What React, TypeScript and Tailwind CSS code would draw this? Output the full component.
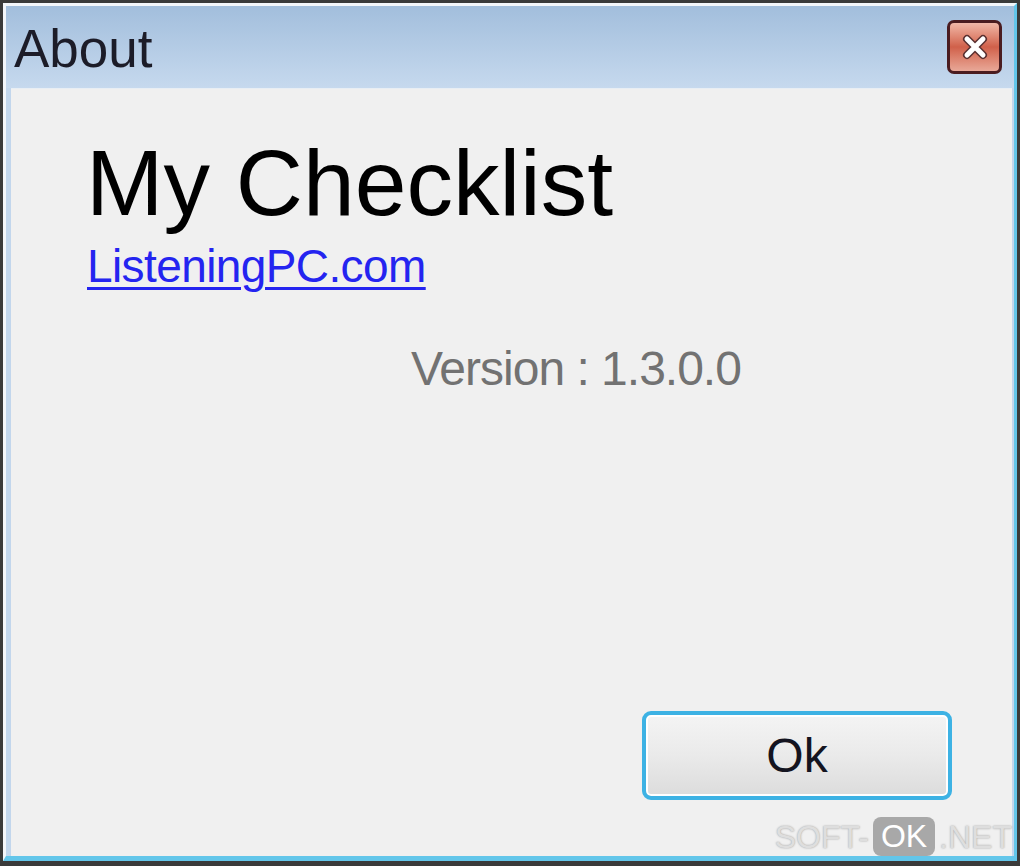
export default function App() {
    return (
        <div className="w-[1020px] h-[866px] bg-[#3a3a3a] pt-[3px] pl-[3px] pr-[3px] pb-[5px] font-['Liberation_Sans',Arial,sans-serif]">
            <div className="relative h-full flex flex-col border-t-[3px] border-l-[3px] border-r-[3px] border-b-[5px] border-t-[#f3f6fa] border-l-[#f3f6fa] border-r-[#63c6ea] border-b-[#63c6ea] bg-[#c2d6ec]">

                {/* Barra de título */}
                <div className="h-[82px] flex items-center justify-between pl-[8px] pr-[12px] bg-gradient-to-b from-[#a2bedc] to-[#c6d9ee]">
                    <span className="text-[53px] leading-none text-[#1c1c28] pt-[2px]">About</span>
                    <div className="w-[55px] h-[54px] rounded-[7px] border-[3px] border-[#4a1c20] bg-gradient-to-b from-[#f0b8a8] via-[#d0604a] to-[#e8a898] flex items-center justify-center">
                        <svg width="30" height="28" viewBox="0 0 30 28">
                            <path d="M7 6 L23 22 M23 6 L7 22" stroke="#5a3030" strokeWidth="8" strokeLinecap="round" />
                            <path d="M7 6 L23 22 M23 6 L7 22" stroke="#ffffff" strokeWidth="5" strokeLinecap="round" />
                        </svg>
                    </div>
                </div>

                {/* Conteúdo */}
                <div className="flex-1 flex flex-col bg-[#f0f0f0] ml-[5px] mr-[2px] border-t border-[#e8eef4] pl-[75px] pt-[48px]">
                    <h1 className="text-[93px] leading-none text-black">My Checklist</h1>
                    <a href="#" className="mt-[13px] ml-[1px] w-fit text-[46px] leading-none tracking-[-0.6px] text-[#2424f0] underline decoration-[3px] underline-offset-[5px]">
                        ListeningPC.com
                    </a>
                    <p className="mt-[56px] ml-[325px] text-[48px] leading-none tracking-[-1px] text-[#727272]">
                        Version : 1.3.0.0
                    </p>

                    <div className="mt-auto self-end mr-[60px] mb-[56px]">
                        <button className="w-[310px] h-[89px] rounded-[9px] border-[4px] border-[#3db2e4] bg-gradient-to-b from-[#f4f4f4] via-[#eaeaea] to-[#dcdcdc] shadow-[inset_0_0_0_2px_#ffffff] text-[48px] leading-none text-[#141420]">
                            Ok
                        </button>
                    </div>
                </div>

                {/* Marca d'água */}
                <div className="absolute right-[2px] bottom-[0px] flex items-center text-[32px] leading-none text-[#dedede] [text-shadow:0_0_2px_#9a9a9a]">
                    <span>SOFT-</span>
                    <span className="mx-[4px] px-[8px] pt-[3px] pb-[4px] rounded-[8px] bg-[#a8a8a8] text-white [text-shadow:none]">OK</span>
                    <span>.NET</span>
                </div>
            </div>
        </div>
    );
}
